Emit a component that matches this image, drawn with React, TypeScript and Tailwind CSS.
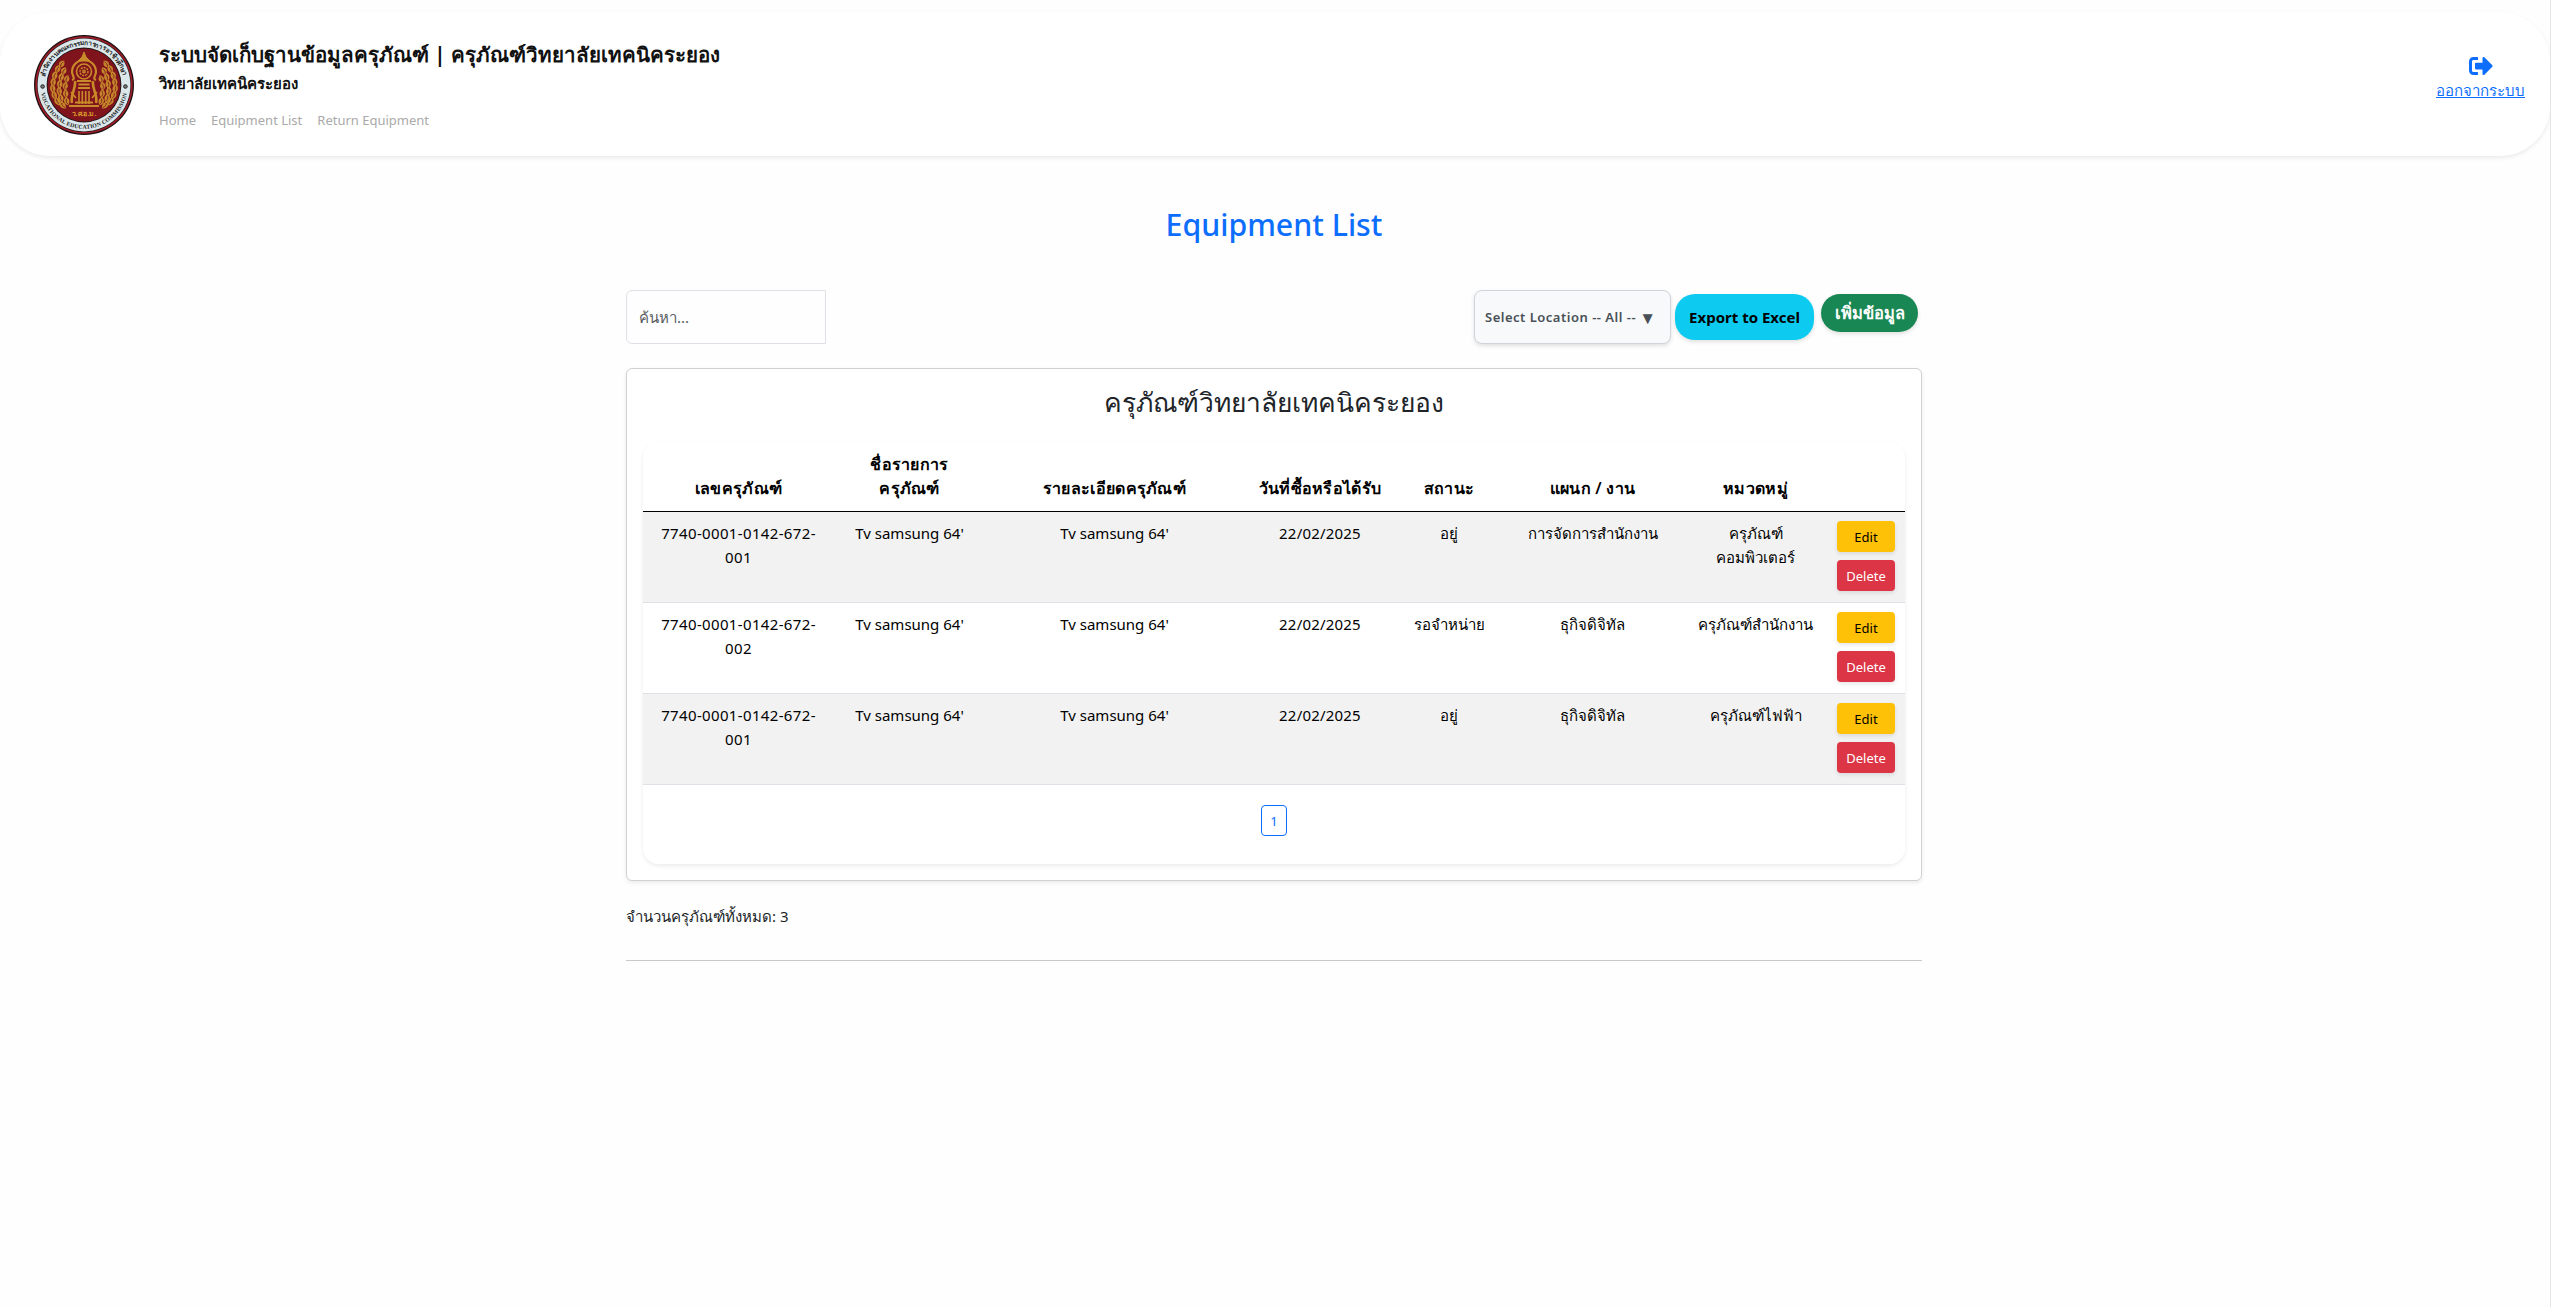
import { FaSignOutAlt } from "react-icons/fa";

type Row = {
  id: string;
  name: string;
  detail: string;
  date: string;
  status: string;
  dept: string;
  category: string[];
};

const rows: Row[] = [
  { id: "001", name: "Tv samsung 64'", detail: "Tv samsung 64'", date: "22/02/2025", status: "อยู่", dept: "การจัดการสำนักงาน", category: ["ครุภัณฑ์", "คอมพิวเตอร์"] },
  { id: "002", name: "Tv samsung 64'", detail: "Tv samsung 64'", date: "22/02/2025", status: "รอจำหน่าย", dept: "ธุกิจดิจิทัล", category: ["ครุภัณฑ์สำนักงาน"] },
  { id: "001", name: "Tv samsung 64'", detail: "Tv samsung 64'", date: "22/02/2025", status: "อยู่", dept: "ธุกิจดิจิทัล", category: ["ครุภัณฑ์ไฟฟ้า"] },
];

const leaves = [
  [23.5, 66, -28, 5], [20.5, 60, -18, 5], [19, 53.5, -6, 5], [19.5, 47, 4, 5], [21, 40.5, 12, 5], [24, 34, 22, 4.5],
  [29, 70, -38, 4.5], [27, 63, -16, 5], [25.5, 56, -6, 5], [26, 49, 4, 5], [27.5, 42, 14, 5], [30, 36, 24, 4],
  [33, 66, -14, 4.5], [32, 58.5, -4, 4.5], [31.5, 51, 8, 4.5], [33, 44, 14, 4], [28, 29, 30, 4],
];

function Wreath() {
  return (
    <g>
      {leaves.map(([x, y, r, h], i) => (
        <g key={i} transform={`translate(${x} ${y}) rotate(${r})`}>
          <path d={`M0 ${h}C-4.6 1-3.4-2.4 .4 ${-h}C1.4-2 4.6 0 0 ${h}Z`} fill="#c4862a" />
          <path d="M0 3C-1.2 1-.8-1 .2-2.4" stroke="#80191f" strokeWidth=".8" fill="none" />
        </g>
      ))}
    </g>
  );
}

function Seal() {
  return (
    <svg viewBox="0 0 100 100" className="size-[100px] shrink-0">
      <defs>
        <path id="arcTop" d="M10.2 50A39.8 39.8 0 0 1 89.8 50" />
        <path id="arcBottom" d="M6.2 50A43.8 43.8 0 0 0 93.8 50" />
      </defs>
      <circle cx="50" cy="50" r="50" fill="#1c1214" />
      <circle cx="50" cy="50" r="48.7" fill="#9c1c28" />
      <circle cx="50" cy="50" r="47" fill="#20191b" />
      <circle cx="50" cy="50" r="46.4" fill="#dbe7ea" />
      <circle cx="50" cy="50" r="37.4" fill="#231516" />
      <circle cx="50" cy="50" r="36.4" fill="#80141c" />
      <text fontSize="6.5" fontWeight="600" fill="#222" className="font-['Noto_Sans',sans-serif]">
        <textPath href="#arcTop" startOffset="8">สำนักงานคณะกรรมการการอาชีวศึกษา</textPath>
      </text>
      <text fontSize="5.8" fontWeight="700" fill="#222" className="font-['Liberation_Serif',serif]">
        <textPath href="#arcBottom" startOffset="8" textLength="121">VOCATIONAL EDUCATION COMMISSION</textPath>
      </text>
      <circle cx="8.6" cy="51.5" r="1.8" fill="#777" stroke="#222" strokeWidth="1" />
      <circle cx="91.4" cy="51.5" r="1.8" fill="#777" stroke="#222" strokeWidth="1" />
      <Wreath />
      <g transform="translate(100 0) scale(-1 1)">
        <Wreath />
      </g>
      <g fill="none" stroke="#c98a29">
        <path d="M50 17L52 22L56 26H44L48 22Z" fill="#c98a29" />
        <path d="M38 45C42 44 38 40 38 37A12 12 0 0 1 62 37C62 40 58 44 62 45" strokeWidth="2.2" />
        <circle cx="50" cy="36.5" r="7.5" strokeWidth="1.6" />
        <circle cx="50" cy="36.5" r="4" strokeWidth="1.4" strokeDasharray="2 1" />
        <circle cx="50" cy="36.5" r="1.2" strokeWidth="1.4" />
        <path d="M43 46H57M44.5 49.5H55.5M44 53H56" strokeWidth="1.8" />
        <path d="M41 46C42 54 36 60 38 68M59 46C58 54 64 60 62 68" strokeWidth="2.6" />
        <path d="M45 56V69M48.3 56V69M51.7 56V69M55 56V69M37 57L42 63M63 57L58 63" strokeWidth="1.6" />
        <path d="M35 71H65M41 67.5H59" strokeWidth="1.8" />
      </g>
      <text x="50" y="80.5" textAnchor="middle" fontSize="7" fontWeight="700" fill="#d99a2e" className="font-['Noto_Sans',sans-serif]">
        ว.ศ.อ.ม.
      </text>
    </svg>
  );
}

function Header() {
  return (
    <header className="mt-3 flex h-36 justify-between rounded-[50px] bg-white pr-[25px] pl-[34px] shadow-[0_2px_4px_rgba(0,0,0,0.08)]">
      <div className="flex gap-[25px] pt-[23px]">
        <Seal />
        <div className="flex flex-col">
          <h1 className="mt-[3px] mb-px h-8 text-[20.5px] leading-8 font-bold whitespace-nowrap text-[#111]">
            ระบบจัดเก็บฐานข้อมูลครุภัณฑ์ | ครุภัณฑ์วิทยาลัยเทคนิคระยอง
          </h1>
          <h2 className="h-6 text-[15px] leading-6 font-bold whitespace-nowrap text-[#111]">วิทยาลัยเทคนิคระยอง</h2>
          <nav className="mt-[15px] flex gap-[15px] text-[13px] leading-5 text-[#aaa]">
            <a>Home</a>
            <a>Equipment List</a>
            <a>Return Equipment</a>
          </nav>
        </div>
      </div>
      <a className="flex flex-col items-center pt-[42px] text-[#0d6efd]">
        <FaSignOutAlt className="size-6" />
        <span className="text-[15px] leading-6 underline">ออกจากระบบ</span>
      </a>
    </header>
  );
}

function Toolbar() {
  return (
    <div className="flex h-[54px] items-start justify-between">
      <div className="flex h-[54px] w-[200px] items-center rounded-l-md border border-[#dee2e6] px-3 text-[15px] text-[#595c5f]">ค้นหา...</div>
      <div className="flex items-start pr-1">
        <div className="flex h-[54px] w-[197px] items-center gap-[3px] rounded-lg border border-[#ced4da] bg-[#f8f9fa] pt-0.5 pl-2.5 text-[13px] font-semibold whitespace-nowrap text-[#495057] shadow-[0_2px_4px_rgba(0,0,0,0.12)]">
          <span className="tracking-[0.5px]">Select Location -- All --</span>
          <span className="text-[17px] leading-4">▼</span>
        </div>
        <div className="mt-1 ml-1 flex h-[46px] w-[139px] items-center justify-center rounded-[20px] bg-[#0dcaf0] text-[15px] font-bold whitespace-nowrap text-black shadow-[0_2px_4px_rgba(0,0,0,0.12)]">
          Export to Excel
        </div>
        <div className="mt-1 ml-[7px] flex h-[38px] w-[97px] items-center justify-center rounded-[20px] bg-[#198754] text-[16.5px] font-bold whitespace-nowrap text-white shadow-[0_2px_4px_rgba(0,0,0,0.12)]">
          เพิ่มข้อมูล
        </div>
      </div>
    </div>
  );
}

const headings = [["เลขครุภัณฑ์"], ["ชื่อรายการ", "ครุภัณฑ์"], ["รายละเอียดครุภัณฑ์"], ["วันที่ซื้อหรือได้รับ"], ["สถานะ"], ["แผนก / งาน"], ["หมวดหมู่"], []];

const columns = "grid grid-cols-[191px_151px_259px_152px_106px_181px_145px_77px]";

function Table() {
  return (
    <div className="h-[422px] overflow-hidden rounded-2xl bg-white text-center text-[15px] leading-6 whitespace-nowrap text-black">
      <div className={`${columns} h-[70px] items-end border-b border-black pb-[11px] text-[16px] font-semibold tracking-[0.3px]`}>
        {headings.map((lines, i) => (
          <div key={i}>
            {lines.map((l) => (
              <div key={l}>{l}</div>
            ))}
          </div>
        ))}
      </div>
      {rows.map((r, i) => (
        <div key={i} className={`${columns} h-[91px] border-b border-[#dee2e6] pt-[9px] odd:bg-white even:bg-[#f2f2f2]`}>
          <div className="tracking-[0.35px]">
            7740-0001-0142-672-
            <br />
            {r.id}
          </div>
          <div>{r.name}</div>
          <div>{r.detail}</div>
          <div className="tracking-[0.2px]">{r.date}</div>
          <div>{r.status}</div>
          <div>{r.dept}</div>
          <div>
            {r.category.map((c) => (
              <div key={c}>{c}</div>
            ))}
          </div>
          <div className="flex flex-col gap-2 pr-[10px] pl-[9px] text-[13px]">
            <button className="h-[31px] rounded bg-[#ffc107] pt-px text-black shadow-[0_2px_4px_rgba(0,0,0,0.1)]">Edit</button>
            <button className="h-[31px] rounded bg-[#dc3545] pt-px text-white shadow-[0_2px_4px_rgba(0,0,0,0.1)]">Delete</button>
          </div>
        </div>
      ))}
      <div className="flex justify-center pt-5">
        <button className="h-[31px] w-[26px] rounded border border-[#0d6efd] text-[13px] text-[#0d6efd]">1</button>
      </div>
    </div>
  );
}

export default function App() {
  return (
    <div className="h-[1307px] overflow-hidden border-r border-[#e4e4e4] bg-[#fefefe] font-['Noto_Sans','Open_Sans',sans-serif]">
      <Header />
      <main className="ml-[626px] w-[1296px] pt-[45px]">
        <h1 className="h-12 text-center text-[30.3px] leading-[48px] font-medium text-[#0d6efd]">Equipment List</h1>
        <div className="mt-[41px]">
          <Toolbar />
        </div>
        <section className="mt-6 h-[513px] rounded-md border border-[#cfd1d3] bg-white px-4 shadow-[0_2px_4px_rgba(0,0,0,0.08)]">
          <h2 className="h-[73px] pt-3.5 text-center text-[26.4px] leading-[38px] text-[#212529]">ครุภัณฑ์วิทยาลัยเทคนิคระยอง</h2>
          <div className="rounded-2xl shadow-[0_2px_4px_rgba(0,0,0,0.08)]">
            <Table />
          </div>
        </section>
        <p className="mt-[23px] text-[15px] leading-6 text-[#212529]">จำนวนครุภัณฑ์ทั้งหมด: 3</p>
        <hr className="mt-8 border-[#c8c9ca]" />
      </main>
    </div>
  );
}
